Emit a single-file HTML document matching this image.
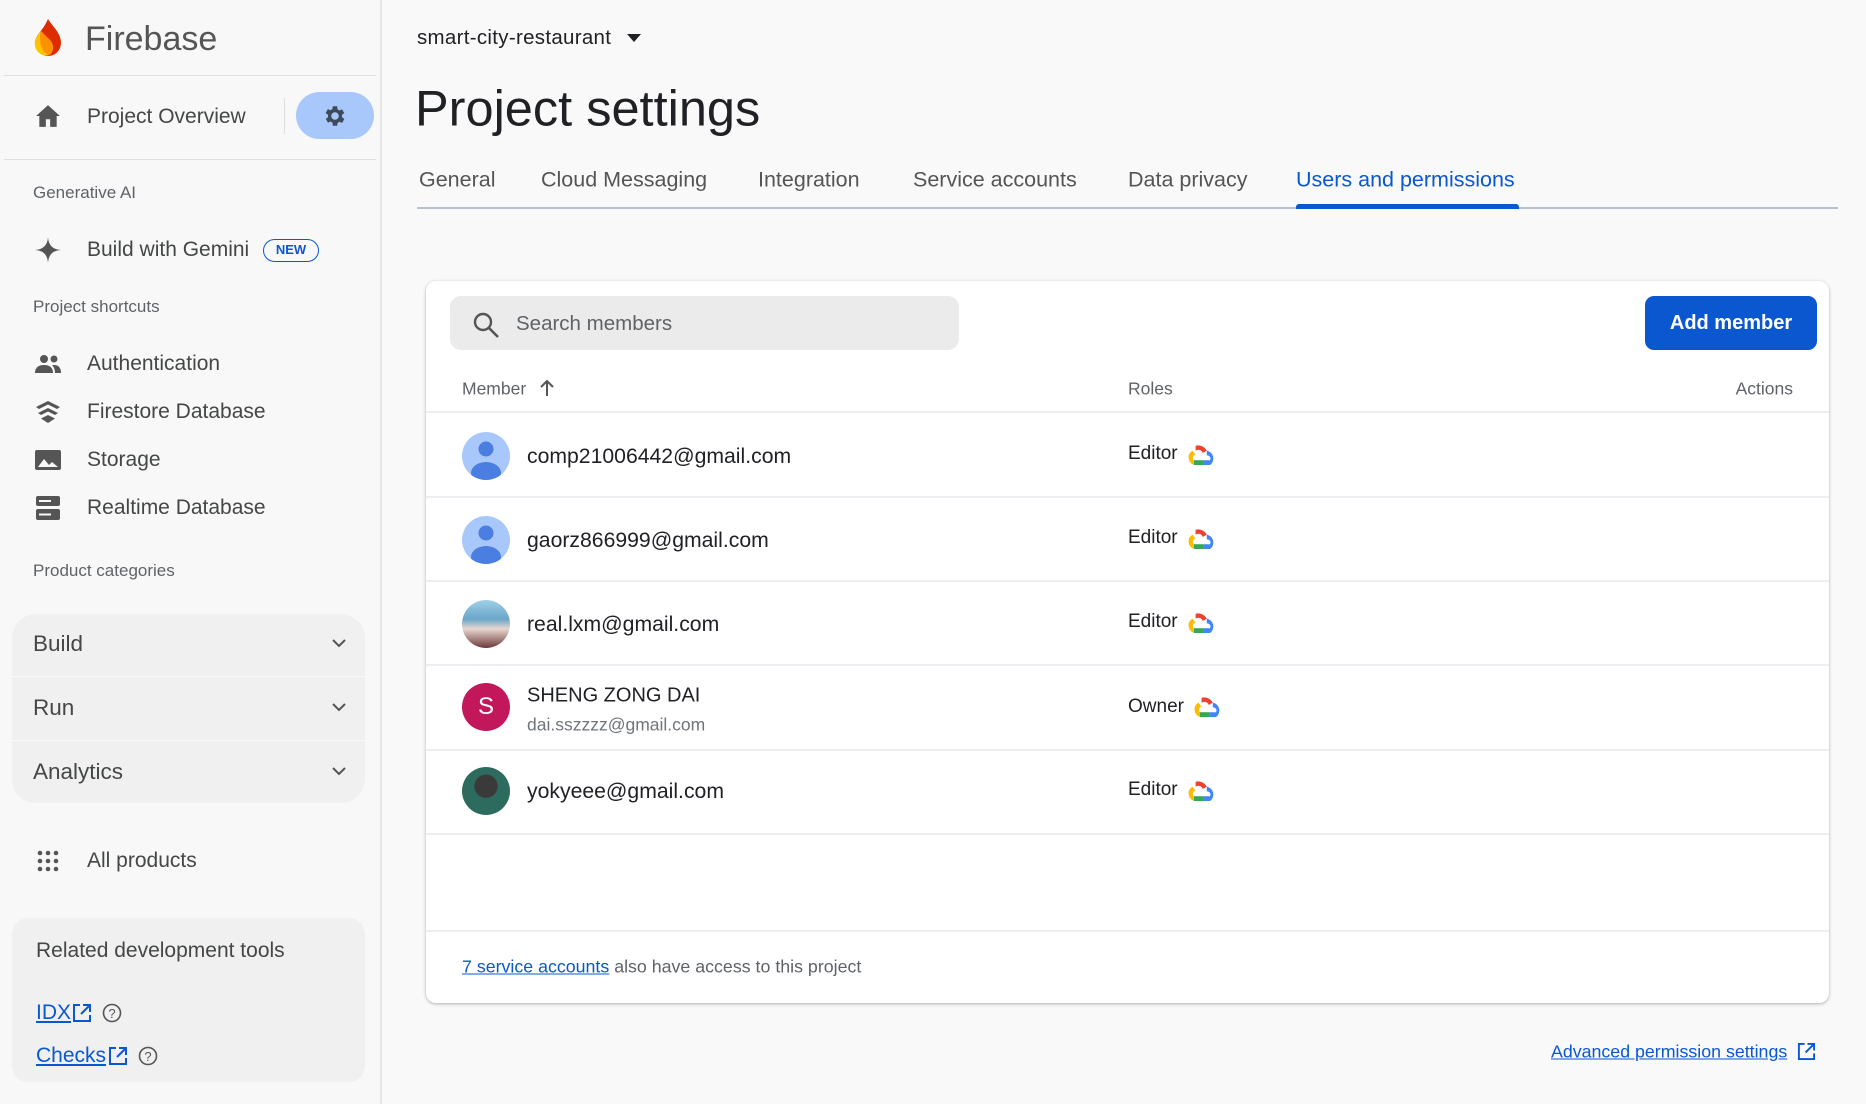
<!DOCTYPE html>
<html><head><meta charset="utf-8"><style>
*{box-sizing:border-box;margin:0;padding:0}
body{width:1866px;height:1104px;overflow:hidden;background:#f9f9f9;font-family:"Liberation Sans",Arial,sans-serif;color:#444746;position:relative}
.a{position:absolute;white-space:nowrap}
.side{position:absolute;left:0;top:0;width:382px;height:1104px;background:#f8f8f8;border-right:2px solid #e6e6e6}
.hr{position:absolute;left:4px;width:372px;height:1px;background:#e0e0e0}
.item{font-size:21px;color:#444746;transform:translateY(-50%)}
.sec{font-size:17px;color:#5f6368;transform:translateY(-50%)}
.ic{position:absolute;transform:translate(-50%,-50%)}
.grp{position:absolute;left:12px;width:353px;background:#f0f0f0}
.tab{position:absolute;top:180px;transform:translateY(-50%);font-size:21.5px;color:#555}
.card{position:absolute;left:426px;top:281px;width:1403px;height:722px;background:#fff;border-radius:10px;box-shadow:0 1px 3px rgba(0,0,0,.3)}
.rl{position:absolute;left:0;width:1403px;height:2px;background:#eceef1}
.em{font-size:21px;color:#202124;transform:translateY(-50%)}
.role{font-size:19px;color:#202124;transform:translateY(-50%)}
.av{position:absolute;left:36px;width:48px;height:48px;border-radius:50%;overflow:hidden}
a{color:#0b57d0}
</style></head><body>
<div class="side">
  <svg class="a" style="left:31px;top:17px" width="34" height="40" viewBox="0 0 34 40"><path d="M17 2C22 10 30 16 30 26a13 13 0 0 1-26 0C4 18 12 14 17 2z" fill="#dd2c00"/><path d="M10 14C5 20 3 24 4 28a11 11 0 0 0 14 10C10 34 8 24 10 14z" fill="#ffc400"/><path d="M10 14c-2 10 0 20 8 24 4-2 6-8 2-14z" fill="#ff9100"/></svg>
  <div class="a" style="left:85px;top:20px;font-size:34px;color:#555">Firebase</div>
  <div class="hr" style="top:75px"></div>
  <svg class="ic" style="left:48px;top:116px" width="26" height="24" viewBox="0 0 24 22"><path d="M12 1L1 11h3v10h6v-7h4v7h6V11h3z" fill="#555"/></svg>
  <div class="a item" style="left:87px;top:117px">Project Overview</div>
  <div class="a" style="left:284px;top:98px;width:1px;height:36px;background:#ddd"></div>
  <div class="a" style="left:296px;top:92px;width:78px;height:47px;border-radius:24px;background:#a8c7fa"></div>
  <svg class="ic" style="left:335px;top:116px" width="26" height="26" viewBox="0 0 24 24"><path fill="#3c4a5c" d="M19.4 13a7.5 7.5 0 0 0 0-2l2.1-1.6-2-3.5-2.5 1a7 7 0 0 0-1.7-1L15 3h-4l-.4 2.7a7 7 0 0 0-1.7 1l-2.5-1-2 3.5L6.6 11a7.5 7.5 0 0 0 0 2l-2.1 1.6 2 3.5 2.5-1a7 7 0 0 0 1.7 1L11 21h4l.4-2.7a7 7 0 0 0 1.7-1l2.5 1 2-3.5zM13 15.5a3.5 3.5 0 1 1 0-7 3.5 3.5 0 0 1 0 7z" transform="translate(-1 0)"/></svg>
  <div class="hr" style="top:159px"></div>
  <div class="a sec" style="left:33px;top:193px">Generative AI</div>
  <svg class="ic" style="left:48px;top:250px" width="28" height="28" viewBox="0 0 24 24"><path d="M12 1C12.5 8 16 11.5 23 12 16 12.5 12.5 16 12 23 11.5 16 8 12.5 1 12 8 11.5 11.5 8 12 1z" fill="#555"/></svg>
  <div class="a item" style="left:87px;top:250px">Build with Gemini</div>
  <div class="a" style="left:263px;top:239px;width:56px;height:23px;border:1.5px solid #0b57d0;border-radius:12px;font-size:13px;font-weight:bold;color:#0b57d0;text-align:center;line-height:20px">NEW</div>
  <div class="a sec" style="left:33px;top:307px">Project shortcuts</div>
  <svg class="ic" style="left:48px;top:364px" width="28" height="20" viewBox="0 0 28 20"><circle cx="10" cy="5" r="4" fill="#555"/><circle cx="20" cy="5" r="3.5" fill="#555"/><path d="M1 19c0-6 4-8 9-8s9 2 9 8z" fill="#555"/><path d="M20 11c4 0 7 2 7 8h-6c0-3-1-6-3-8z" fill="#555"/></svg>
  <div class="a item" style="left:87px;top:364px">Authentication</div>
  <svg class="ic" style="left:48px;top:412px" width="26" height="24" viewBox="0 0 26 24"><path d="M13 1L1 7l3 2 9-4.5 9 4.5 3-2z M13 8L3 13l3 2 7-3.5 7 3.5 3-2z M13 15L6 18.5 13 23l7-4.5z" fill="#555"/></svg>
  <div class="a item" style="left:87px;top:412px">Firestore Database</div>
  <svg class="ic" style="left:48px;top:460px" width="28" height="22" viewBox="0 0 28 22"><rect x="1" y="1" width="26" height="20" rx="2" fill="#555"/><path d="M4 18l6-8 5 6 3-3 6 5z" fill="#f8f8f8"/></svg>
  <div class="a item" style="left:87px;top:460px">Storage</div>
  <svg class="ic" style="left:48px;top:508px" width="26" height="26" viewBox="0 0 26 26"><rect x="1" y="1" width="24" height="10" rx="2" fill="#555"/><rect x="1" y="14" width="24" height="11" rx="2" fill="#555"/><rect x="4" y="5" width="12" height="2" fill="#f8f8f8"/><rect x="4" y="18.5" width="12" height="2" fill="#f8f8f8"/></svg>
  <div class="a item" style="left:87px;top:508px">Realtime Database</div>
  <div class="a sec" style="left:33px;top:571px">Product categories</div>
  <div class="grp" style="top:614px;height:189px;border-radius:24px"></div>
  <div class="a" style="left:12px;top:676px;width:353px;height:1px;background:#fafafa"></div>
  <div class="a" style="left:12px;top:740px;width:353px;height:1px;background:#fafafa"></div>
  <div class="a item" style="left:33px;top:644px;font-size:22.5px">Build</div>
  <div class="a item" style="left:33px;top:708px;font-size:22.5px">Run</div>
  <div class="a item" style="left:33px;top:772px;font-size:22.5px">Analytics</div>
  <svg class="ic" style="left:339px;top:643px" width="16" height="10" viewBox="0 0 16 10"><path d="M2 2l6 6 6-6" stroke="#555" stroke-width="2" fill="none"/></svg>
  <svg class="ic" style="left:339px;top:707px" width="16" height="10" viewBox="0 0 16 10"><path d="M2 2l6 6 6-6" stroke="#555" stroke-width="2" fill="none"/></svg>
  <svg class="ic" style="left:339px;top:771px" width="16" height="10" viewBox="0 0 16 10"><path d="M2 2l6 6 6-6" stroke="#555" stroke-width="2" fill="none"/></svg>
  <svg class="ic" style="left:48px;top:861px" width="22" height="22" viewBox="0 0 22 22"><g fill="#555"><circle cx="3" cy="3" r="2.3"/><circle cx="11" cy="3" r="2.3"/><circle cx="19" cy="3" r="2.3"/><circle cx="3" cy="11" r="2.3"/><circle cx="11" cy="11" r="2.3"/><circle cx="19" cy="11" r="2.3"/><circle cx="3" cy="19" r="2.3"/><circle cx="11" cy="19" r="2.3"/><circle cx="19" cy="19" r="2.3"/></g></svg>
  <div class="a item" style="left:87px;top:861px">All products</div>
  <div class="grp" style="top:918px;height:164px;border-radius:16px"></div>
  <div class="a item" style="left:36px;top:951px">Related development tools</div>
  <div class="a item" style="left:36px;top:1013px"><a href="#" style="color:#0b57d0">IDX</a></div>
  <svg class="ic" style="left:82px;top:1013px" width="20" height="20" viewBox="0 0 20 20"><path d="M8 2H2v16h16v-6M11 2h7v7M18 2l-9 9" stroke="#0b57d0" stroke-width="2" fill="none"/></svg>
  <svg class="ic" style="left:112px;top:1013px" width="20" height="20" viewBox="0 0 20 20"><circle cx="10" cy="10" r="8.5" stroke="#555" stroke-width="1.6" fill="none"/><text x="10" y="15" font-size="13" text-anchor="middle" fill="#555" font-family="Liberation Sans">?</text></svg>
  <div class="a item" style="left:36px;top:1056px"><a href="#" style="color:#0b57d0">Checks</a></div>
  <svg class="ic" style="left:118px;top:1056px" width="20" height="20" viewBox="0 0 20 20"><path d="M8 2H2v16h16v-6M11 2h7v7M18 2l-9 9" stroke="#0b57d0" stroke-width="2" fill="none"/></svg>
  <svg class="ic" style="left:148px;top:1056px" width="20" height="20" viewBox="0 0 20 20"><circle cx="10" cy="10" r="8.5" stroke="#555" stroke-width="1.6" fill="none"/><text x="10" y="15" font-size="13" text-anchor="middle" fill="#555" font-family="Liberation Sans">?</text></svg>
</div>

<div class="a" style="left:417px;top:38px;transform:translateY(-50%);font-size:20.5px;color:#202124;letter-spacing:0.3px">smart-city-restaurant</div>
<svg class="a" style="left:627px;top:34px" width="14" height="9" viewBox="0 0 14 9"><path d="M0 0h14L7 8z" fill="#202124"/></svg>
<div class="a" style="left:415px;top:108px;transform:translateY(-50%);font-size:50.5px;color:#202124">Project settings</div>
<div class="tab" style="left:419px">General</div>
<div class="tab" style="left:541px">Cloud Messaging</div>
<div class="tab" style="left:758px">Integration</div>
<div class="tab" style="left:913px">Service accounts</div>
<div class="tab" style="left:1128px">Data privacy</div>
<div class="tab" style="left:1296px;color:#0b57d0">Users and permissions</div>
<div class="a" style="left:417px;top:207px;width:1421px;height:2px;background:#b9c0cc"></div>
<div class="a" style="left:1296px;top:204px;width:223px;height:5px;background:#0b57d0;border-radius:3px 3px 0 0"></div>

<div class="card">
  <div class="a" style="left:24px;top:15px;width:509px;height:54px;background:#ebebeb;border-radius:11px"></div>
  <svg class="a" style="left:46px;top:30px" width="28" height="28" viewBox="0 0 28 28"><circle cx="11" cy="11" r="8" stroke="#555" stroke-width="2.4" fill="none"/><path d="M17 17l9 9" stroke="#555" stroke-width="2.6"/></svg>
  <div class="a" style="left:90px;top:43px;transform:translateY(-50%);font-size:20.5px;color:#5f6368">Search members</div>
  <div class="a" style="left:1219px;top:15px;width:172px;height:54px;background:#0b57d0;border-radius:9px;color:#fff;font-size:20px;font-weight:bold;text-align:center;line-height:54px">Add member</div>
  <div class="a" style="left:36px;top:108px;transform:translateY(-50%);font-size:17.5px;color:#5f6368">Member</div>
  <svg class="a" style="left:114px;top:98px" width="14" height="18" viewBox="0 0 14 18"><path d="M7 17V2M1 8l6-6 6 6" stroke="#555" stroke-width="2" fill="none"/></svg>
  <div class="a" style="left:702px;top:108px;transform:translateY(-50%);font-size:17.5px;color:#5f6368">Roles</div>
  <div class="a" style="right:36px;top:108px;transform:translateY(-50%);font-size:17.5px;color:#5f6368">Actions</div>
  <div class="rl" style="top:130px"></div>
  <div class="rl" style="top:215px"></div>
  <div class="rl" style="top:299px"></div>
  <div class="rl" style="top:383px"></div>
  <div class="rl" style="top:468px"></div>
  <div class="rl" style="top:552px"></div>
  <div class="rl" style="top:649px"></div>

  <div class="av" style="top:151px;background:#a8c7fa"><svg width="48" height="48" viewBox="0 0 48 48"><circle cx="24" cy="17" r="7.5" fill="#4a7ee0"/><ellipse cx="24" cy="41" rx="15" ry="11" fill="#4a7ee0"/></svg></div>
  <div class="a em" style="left:101px;top:176px;font-size:21.2px">comp21006442@gmail.com</div>
  <div class="a role" style="left:702px;top:173px">Editor</div>
  <div class="av" style="top:235px;background:#a8c7fa"><svg width="48" height="48" viewBox="0 0 48 48"><circle cx="24" cy="17" r="7.5" fill="#4a7ee0"/><ellipse cx="24" cy="41" rx="15" ry="11" fill="#4a7ee0"/></svg></div>
  <div class="a em" style="left:101px;top:260px;font-size:21.2px">gaorz866999@gmail.com</div>
  <div class="a role" style="left:702px;top:257px">Editor</div>
  <div class="av" style="top:319px;background:linear-gradient(180deg,#9fd0e8 0%,#6aa6c8 40%,#e8d6d0 60%,#6b3a3a 100%)"></div>
  <div class="a em" style="left:101px;top:344px;font-size:21.2px">real.lxm@gmail.com</div>
  <div class="a role" style="left:702px;top:341px">Editor</div>
  <div class="av" style="top:402px;background:#c2185b;color:#fff;font-size:24px;text-align:center;line-height:48px">S</div>
  <div class="a em" style="left:101px;top:415px;font-size:20px">SHENG ZONG DAI</div>
  <div class="a em" style="left:101px;top:444px;font-size:17.5px;color:#70757a">dai.sszzzz@gmail.com</div>
  <div class="a role" style="left:702px;top:426px">Owner</div>
  <div class="av" style="top:486px;background:radial-gradient(circle at 50% 40%,#3a3a3a 0 30%,#2d6b5e 32%)"></div>
  <div class="a em" style="left:101px;top:511px;font-size:21.2px">yokyeee@gmail.com</div>
  <div class="a role" style="left:702px;top:509px">Editor</div>

  <div class="a" style="left:36px;top:686px;transform:translateY(-50%);font-size:17.8px;color:#5f6368"><a href="#">7 service accounts</a> also have access to this project</div>
</div>
<svg style="position:absolute;left:0;top:0" width="1866" height="1104">
  <defs><g id="gc"><path d="M6 3a6 6 0 0 1 7 3l-2.5 1.5A3 3 0 0 0 6 6z" fill="#ea4335"/><path d="M13 6a5 5 0 0 1 2 9h-4v-3h4a2 2 0 0 0-2-3z" fill="#4285f4"/><path d="M11 15H5v-3h6z" fill="#34a853"/><path d="M5 15a5 5 0 0 1-1-9l2 2.5A2 2 0 0 0 5 12z" fill="#fbbc04"/></g></defs>
  <use href="#gc" transform="translate(1186 441) scale(1.6)"/>
  <use href="#gc" transform="translate(1186 525) scale(1.6)"/>
  <use href="#gc" transform="translate(1186 609) scale(1.6)"/>
  <use href="#gc" transform="translate(1192 693) scale(1.6)"/>
  <use href="#gc" transform="translate(1186 777) scale(1.6)"/>
</svg>
<div class="a" style="left:1551px;top:1052px;transform:translateY(-50%);font-size:17.8px"><a href="#">Advanced permission settings</a></div>
<svg class="a" style="left:1797px;top:1042px" width="19" height="19" viewBox="0 0 20 20"><path d="M8 2H2v16h16v-6M11 2h7v7M18 2l-9 9" stroke="#0b57d0" stroke-width="2" fill="none"/></svg>
</body></html>
